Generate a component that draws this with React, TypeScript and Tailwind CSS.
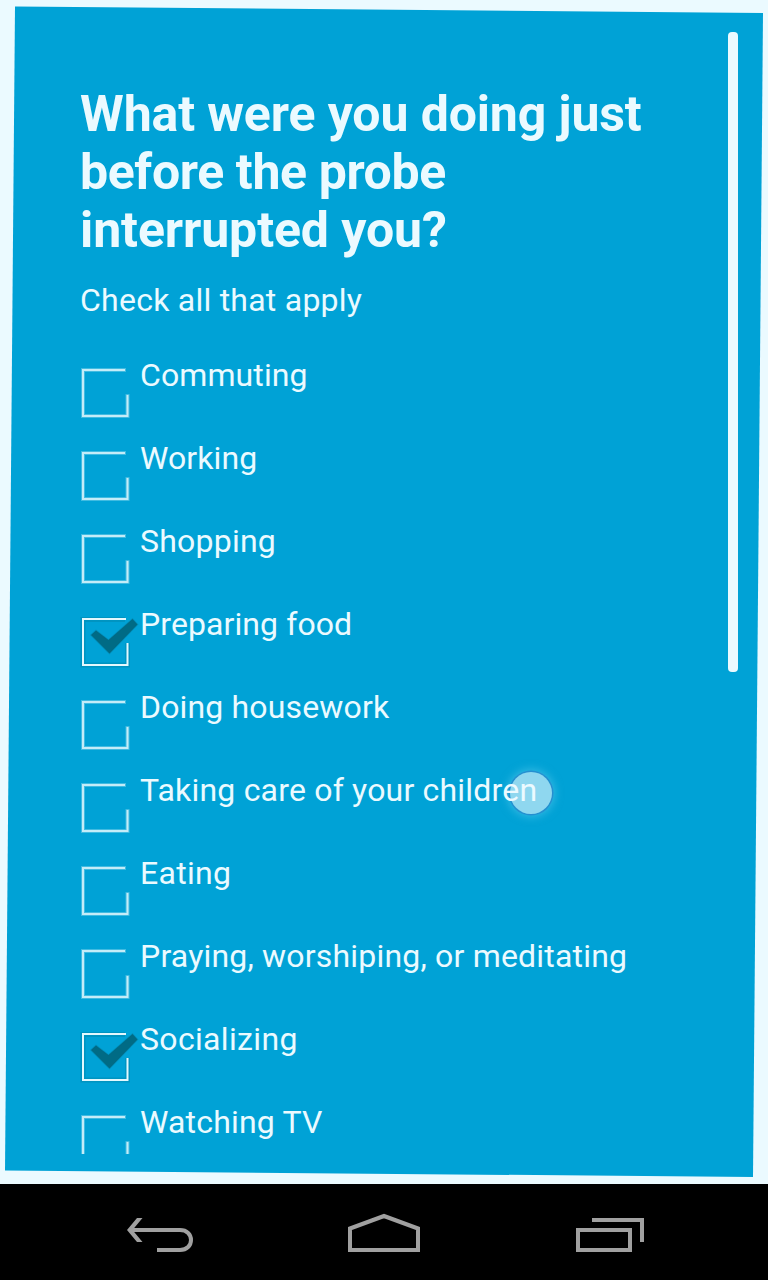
const activities = [
  { label: 'Commuting', checked: false, tracking: 'tracking-[0.1px]' },
  { label: 'Working', checked: false, tracking: 'tracking-[0.1px]' },
  { label: 'Shopping', checked: false, tracking: 'tracking-[0.22px]' },
  { label: 'Preparing food', checked: true, tracking: 'tracking-[0.09px]' },
  { label: 'Doing housework', checked: false, tracking: 'tracking-[0.16px]' },
  { label: 'Taking care of your children', checked: false, tracking: 'tracking-[0.19px]' },
  { label: 'Eating', checked: false, tracking: 'tracking-[0.28px]' },
  { label: 'Praying, worshiping, or meditating', checked: false, tracking: 'tracking-[0.19px]' },
  { label: 'Socializing', checked: true, tracking: 'tracking-[0.33px]' },
  { label: 'Watching TV', checked: false, tracking: 'tracking-[0.17px]' },
];

function CheckBox({ checked }: { checked: boolean }) {
  return (
    <svg className="h-[83px] w-[60px] shrink-0" viewBox="0 0 60 83" fill="none">
      {checked ? (
        <>
          <path d="M45 16.5H3V62H47.5V40" stroke="#006b85" strokeOpacity="0.25" strokeWidth="5" />
          <path d="M46 16H3V62H47.5V40" stroke="#e4f8fe" strokeWidth="2" />
          <path d="M11 32L16 27.5L28.5 37L52.5 16L57.5 21.5L29.5 50.5Z" fill="#006b85" stroke="#006b85" strokeOpacity="0.3" strokeWidth="1.5" />
        </>
      ) : (
        <>
          <path d="M46 16H3V62H47.5V40" stroke="#ebfaff" strokeOpacity="0.28" strokeWidth="4" />
          <path d="M45 16H3V62H47.5V41" stroke="#c4ecf8" strokeWidth="2" />
        </>
      )}
    </svg>
  );
}

export default function App() {
  return (
    <div className="flex h-[1280px] w-[768px] flex-col overflow-hidden bg-[#ebfaff] font-[Roboto,sans-serif] text-[#ebfaff]">
      <main className="relative h-[1184px] shrink-0 bg-[#00a2d6] [clip-path:polygon(15px_6.5px,763px_13px,753px_1177px,5px_1170.5px)]">
        <div className="absolute top-[772px] left-[510px] size-[42px] rounded-full bg-[#cceefa]/70 shadow-[0_0_0_1.5px_#268fd0,0_0_9px_3px_#65cff080]" />
        <div className="relative flex h-[1154px] justify-between overflow-hidden pl-20 pr-[30px]">
          <section className="w-[600px] pt-[85px]">
            <h1 className="text-[50px] leading-[58px] font-bold">
              <span className="block tracking-[-0.12px]">What were you doing just</span>
              <span className="block tracking-[-0.38px]">before the probe</span>
              <span className="block tracking-[-0.1px]">interrupted you?</span>
            </h1>
            <p className="mt-[22px] text-[32px] leading-[38px] tracking-[0.24px]">Check all that apply</p>
            <ul className="mt-[35px]">
              {activities.map(({ label, checked, tracking }) => (
                <li key={label} className="flex h-[83px]">
                  <CheckBox checked={checked} />
                  <span className={`pt-[2px] text-[32px] leading-[38px] whitespace-nowrap ${tracking}`}>{label}</span>
                </li>
              ))}
            </ul>
          </section>
          <div className="mt-8 h-[640px] w-[10px] rounded-[4px] bg-[#ebfaff]" />
        </div>
      </main>
      <nav className="flex h-24 shrink-0 items-center justify-between bg-black px-28">
        <svg className="h-24 w-24" viewBox="112 1184 96 96" fill="none" stroke="#a0a0a0" strokeWidth="4">
          <path d="M130 1230H180C187 1230 191 1234.5 191 1240C191 1245.5 187 1250 180 1250H157" />
          <path d="M137 1218H142.5L132.5 1230L142.5 1242H137L127 1230Z" fill="#a0a0a0" stroke="none" />
        </svg>
        <svg className="h-24 w-24" viewBox="336 1184 96 96" fill="none" stroke="#a0a0a0" strokeWidth="4">
          <path d="M350 1250V1228.5L384 1216L418 1228.5V1250Z" />
        </svg>
        <svg className="h-24 w-24" viewBox="560 1184 96 96" fill="none" stroke="#a0a0a0" strokeWidth="4">
          <path d="M592 1220H642V1242M578 1230H630V1250H578Z" />
        </svg>
      </nav>
    </div>
  );
}
